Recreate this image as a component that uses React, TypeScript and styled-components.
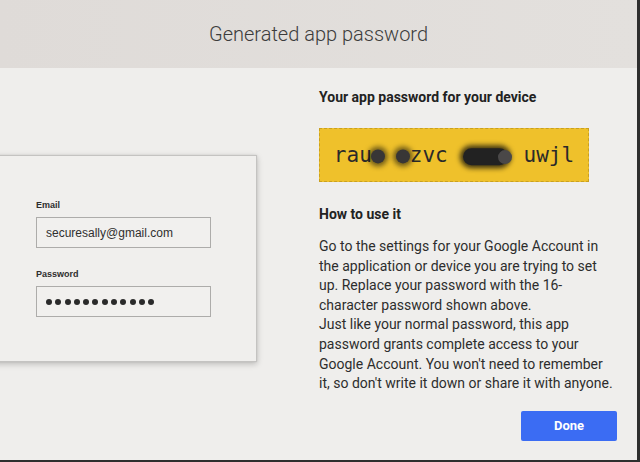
import styled, { createGlobalStyle } from 'styled-components'

const GlobalStyle = createGlobalStyle`
  html, body {
    margin: 0;
    padding: 0;
    background: #efeeec;
  }
  * {
    box-sizing: border-box;
  }
`

const Frame = styled.div`
  width: 640px;
  height: 462px;
  display: flex;
  flex-direction: column;
  background: #efeeec;
  border-right: 3px solid #2e2e2e;
  border-bottom: 2px solid #2e2e2e;
  overflow: hidden;
`

const Header = styled.div`
  height: 68px;
  flex-shrink: 0;
  display: flex;
  align-items: center;
  justify-content: center;
  background: linear-gradient(90deg, #dfdbd8 0%, #e3e0dd 100%);
  font-family: Roboto, "Liberation Sans", sans-serif;
  font-weight: 300;
  font-size: 20px;
  color: #3c3c3c;
`

const Body = styled.div`
  flex: 1;
  display: flex;
`

const LeftPane = styled.div`
  width: 319px;
  flex-shrink: 0;
  padding-top: 87px;
`

const LoginCard = styled.div`
  margin-left: -40px;
  width: 297px;
  height: 207px;
  background: #f0efed;
  border: 1px solid #c4c3c1;
  box-shadow: 0 2px 6px rgba(0, 0, 0, 0.22), 0 0 2px rgba(0, 0, 0, 0.08);
  padding: 44px 0 0 75px;
  display: flex;
  flex-direction: column;
  font-family: "Liberation Sans", Arial, sans-serif;
`

const FieldLabel = styled.div`
  font-size: 9px;
  font-weight: 700;
  color: #2e2e2e;
  line-height: 11px;
  margin-bottom: 6px;
`

const FieldBox = styled.div<{ gap?: number }>`
  width: 175px;
  height: 31px;
  border: 1px solid #adacaa;
  background: #f1f0ee;
  display: flex;
  align-items: center;
  gap: ${({ gap }) => (gap ? `${gap}px` : '0')};
  padding-left: 9px;
  margin-bottom: 21px;
  font-size: 12px;
  color: #2f2f2f;
`

const Dot = styled.span`
  width: 6px;
  height: 6px;
  border-radius: 50%;
  background: #2a2a2a;
`

const RightPane = styled.div`
  flex: 1;
  display: flex;
  flex-direction: column;
  padding: 21px 20px 0 0;
  font-family: Roboto, "Liberation Sans", sans-serif;
  color: #2b2b2b;
`

const Heading = styled.div`
  font-size: 14px;
  font-weight: 700;
  line-height: 16px;
  color: #222;
`

const PasswordBox = styled.div`
  margin-top: 23px;
  width: 270px;
  height: 54px;
  background: #efc12b;
  border: 1px dashed #c9a020;
  display: flex;
  align-items: center;
  justify-content: center;
  font-family: "DejaVu Sans Mono", "Liberation Mono", monospace;
  font-size: 21px;
  color: #2a2a2a;
`

const PasswordText = styled.span`
  white-space: pre;
`

const Hidden = styled.span<{ wide?: boolean }>`
  position: relative;
  color: transparent;

  &::after {
    content: '';
    position: absolute;
    top: 50%;
    left: ${({ wide }) => (wide ? '3px' : '-1px')};
    width: ${({ wide }) => (wide ? 'calc(100% - 6px)' : '14px')};
    height: ${({ wide }) => (wide ? '17px' : '14px')};
    transform: translateY(-40%);
    border-radius: 10px;
    background: ${({ wide }) => (wide ? '#222' : '#383636')};
    box-shadow: 0 0 5px 3px rgba(10, 10, 10, ${({ wide }) => (wide ? 0.75 : 0.55)});
  }
`

const Smudge = styled.span`
  position: absolute;
  right: -1px;
  top: 50%;
  width: 14px;
  height: 14px;
  transform: translateY(-35%);
  border-radius: 50%;
  background: #4a4848;
  z-index: 1;
`

const SubHeading = styled(Heading)`
  margin-top: 24px;
`

const Instructions = styled.div`
  margin-top: 15px;
  font-size: 14px;
  line-height: 19.6px;
  color: #2d2d2d;
  white-space: nowrap;
`

const Actions = styled.div`
  margin-top: 17px;
  display: flex;
  justify-content: flex-end;
`

const DoneButton = styled.button`
  width: 96px;
  height: 30px;
  border: none;
  border-radius: 2px;
  background: #3b6cf3;
  color: #fff;
  font-family: Roboto, "Liberation Sans", sans-serif;
  font-weight: 700;
  font-size: 13px;
  cursor: pointer;
`

const LINES = [
  'Go to the settings for your Google Account in',
  'the application or device you are trying to set',
  'up. Replace your password with the 16-',
  'character password shown above.',
  'Just like your normal password, this app',
  'password grants complete access to your',
  "Google Account. You won't need to remember",
  "it, so don't write it down or share it with anyone.",
]

export default function App() {
  return (
    <>
      <GlobalStyle />
      <Frame>
        <Header>Generated app password</Header>
        <Body>
          <LeftPane>
            <LoginCard>
              <FieldLabel>Email</FieldLabel>
              <FieldBox>securesally@gmail.com</FieldBox>
              <FieldLabel>Password</FieldLabel>
              <FieldBox gap={3.3}>
                {Array.from({ length: 12 }).map((_, i) => (
                  <Dot key={i} />
                ))}
              </FieldBox>
            </LoginCard>
          </LeftPane>
          <RightPane>
            <Heading>Your app password for your device</Heading>
            <PasswordBox>
              <PasswordText>
                {'rau'}
                <Hidden>o</Hidden>
                {' '}
                <Hidden>o</Hidden>
                {'zvc '}
                <Hidden wide>
                  xxxd<Smudge />
                </Hidden>
                {' uwjl'}
              </PasswordText>
            </PasswordBox>
            <SubHeading>How to use it</SubHeading>
            <Instructions>
              {LINES.map((line, i) => (
                <div key={i}>{line}</div>
              ))}
            </Instructions>
            <Actions>
              <DoneButton>Done</DoneButton>
            </Actions>
          </RightPane>
        </Body>
      </Frame>
    </>
  )
}
